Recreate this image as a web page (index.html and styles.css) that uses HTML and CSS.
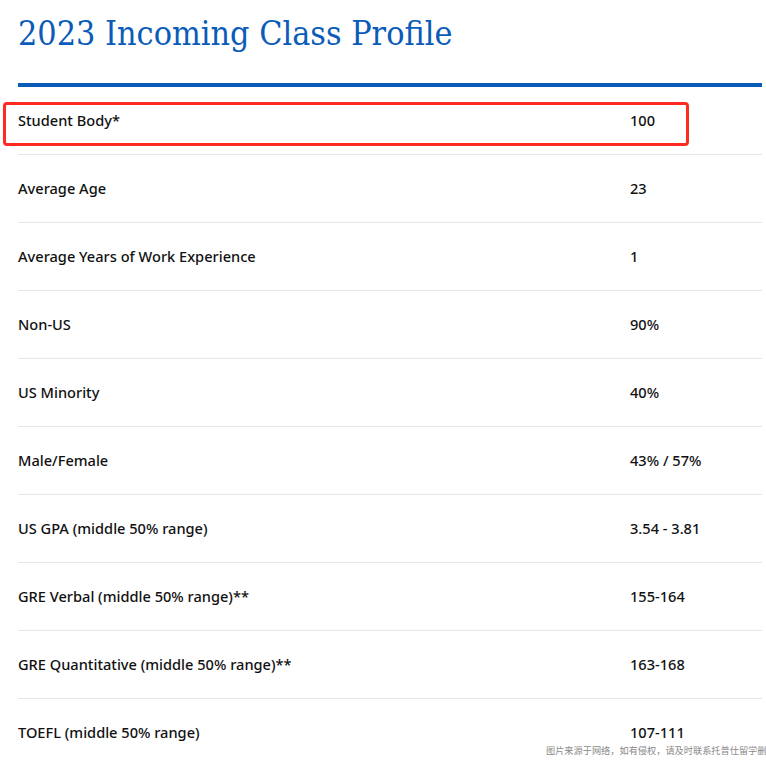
FILE: index.html
```html
<!DOCTYPE html>
<html lang="en">
<head>
<meta charset="utf-8">
<title>2023 Incoming Class Profile</title>
<link rel="stylesheet" href="styles.css">
</head>
<body>
<main class="profile">
  <h1 class="title">2023 Incoming Class Profile</h1>
  <div class="table">
    <div class="row"><span class="label">Student Body*</span><span class="value">100</span></div>
    <div class="row"><span class="label">Average Age</span><span class="value">23</span></div>
    <div class="row"><span class="label">Average Years of Work Experience</span><span class="value">1</span></div>
    <div class="row"><span class="label">Non-US</span><span class="value">90%</span></div>
    <div class="row"><span class="label">US Minority</span><span class="value">40%</span></div>
    <div class="row"><span class="label">Male/Female</span><span class="value">43% / 57%</span></div>
    <div class="row"><span class="label">US GPA (middle 50% range)</span><span class="value">3.54 - 3.81</span></div>
    <div class="row"><span class="label">GRE Verbal (middle 50% range)**</span><span class="value">155-164</span></div>
    <div class="row"><span class="label">GRE Quantitative (middle 50% range)**</span><span class="value">163-168</span></div>
    <div class="row"><span class="label">TOEFL (middle 50% range)</span><span class="value">107-111</span></div>
  </div>
  <div class="highlight"></div>
</main>
<div class="watermark">图片来源于网络，如有侵权，请及时联系托普仕留学删除</div>
</body>
</html>
```

FILE: styles.css
```css
html, body {
  margin: 0;
  padding: 0;
  background: #ffffff;
  overflow: hidden;
}
body {
  width: 766px;
  height: 761px;
  position: relative;
}
.profile {
  position: relative;
  margin: 0 4px 0 18px;
}
.title {
  margin: 0;
  padding-top: 14px;
  height: 83px;
  box-sizing: border-box;
  font-family: "DejaVu Serif Condensed", "DejaVu Serif", serif;
  font-weight: normal;
  font-size: 33.8px;
  line-height: 40px;
  color: #0a5cb8;
}
.table {
  border-top: 4px solid #0a5cb8;
}
.row {
  display: flex;
  align-items: center;
  height: 67px;
  padding-bottom: 1px;
  box-sizing: border-box;
  height: 68px;
  border-bottom: 1px solid #e6e6e6;
  font-family: "Noto Sans", sans-serif;
  font-weight: 500;
  font-size: 14.6px;
  color: #111111;
}
.label {
  width: 612px;
}
.value {
  flex: 1;
}
.highlight {
  position: absolute;
  left: -15px;
  top: 102px;
  width: 680px;
  height: 38px;
  border: 3px solid #ff2b22;
  border-radius: 4px;
}
.watermark {
  position: absolute;
  left: 546px;
  top: 744px;
  white-space: nowrap;
  font-family: "Noto Sans CJK SC", sans-serif;
  font-size: 9.2px;
  line-height: 12px;
  color: #8a8a8a;
}
```
